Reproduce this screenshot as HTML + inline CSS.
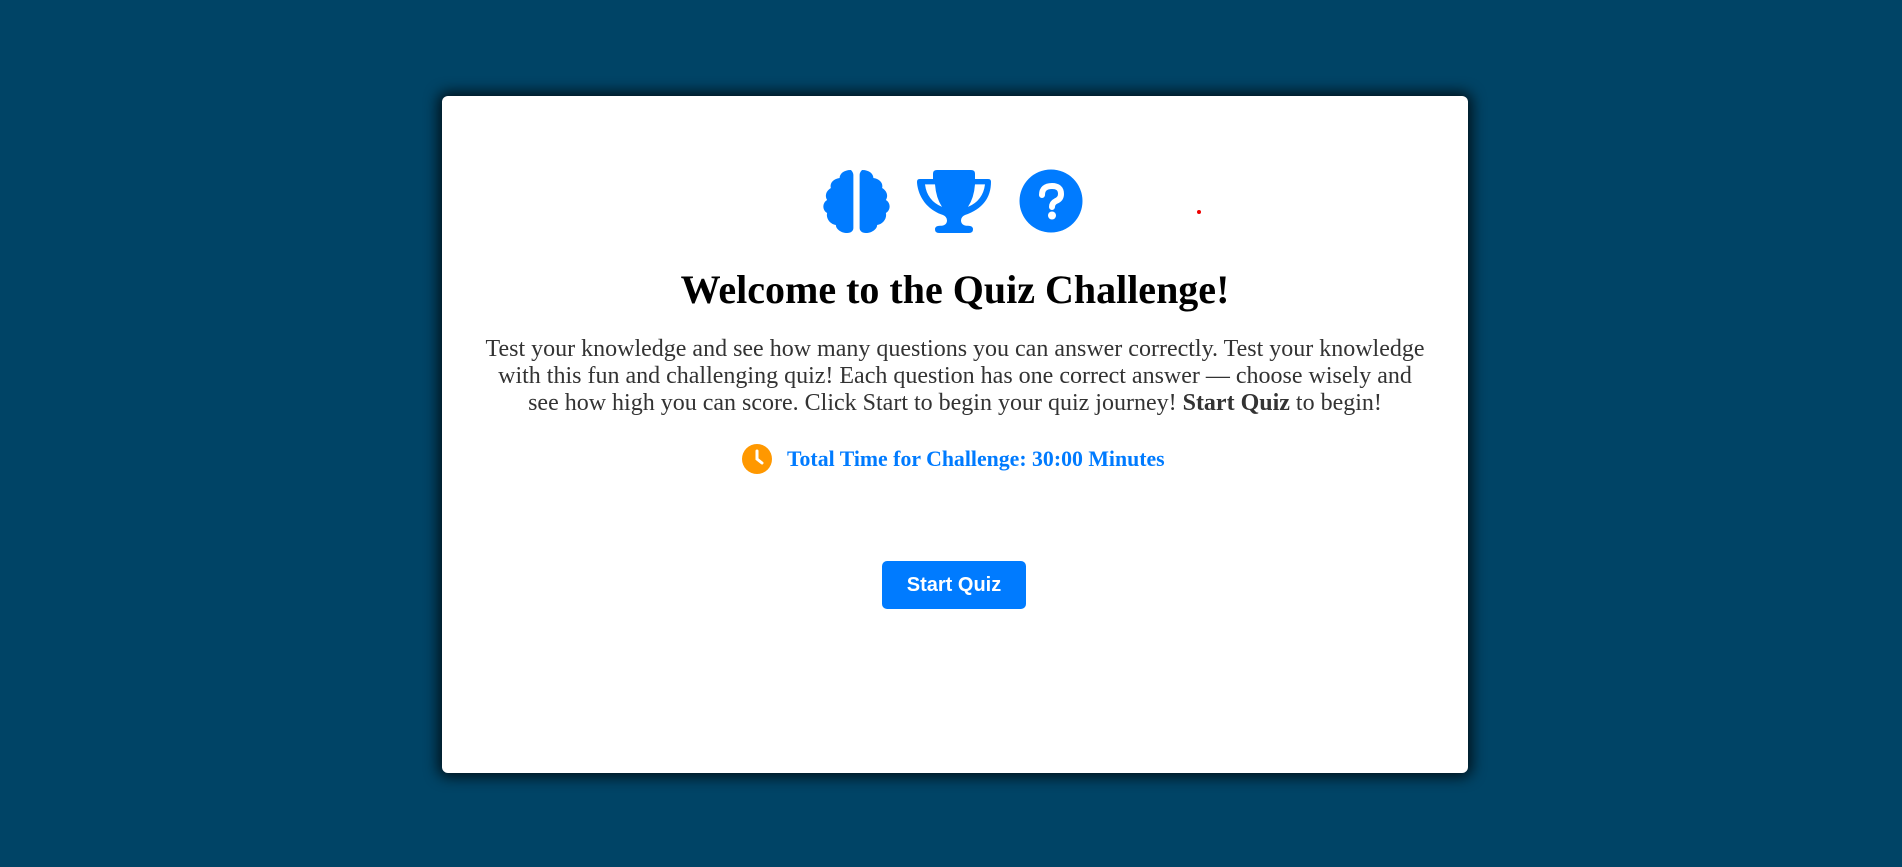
<!DOCTYPE html>
<html><head><meta charset="utf-8"><style>
html,body{margin:0;padding:0;width:1902px;height:867px;background:#004466;overflow:hidden}
.card{position:absolute;left:442px;top:96px;width:1026px;height:677px;background:#fff;border-radius:6px;box-shadow:0 0 14px 4px rgba(0,0,0,.75)}
h1{position:absolute;left:0;width:1026px;top:170px;margin:0;text-align:center;font:bold 40px "Liberation Serif",serif;color:#000}
p{position:absolute;left:42px;width:942px;top:240px;margin:0;text-align:center;font:24px/27px "Liberation Serif",serif;color:#333}
.time{position:absolute;left:300px;top:348px;display:flex;align-items:center;font:bold 21.8px "Liberation Serif",serif;color:#007bff}
.btn{position:absolute;left:440px;top:465px;width:144px;height:48px;background:#007bff;border-radius:5px;color:#fff;font:bold 20px/48px "Liberation Sans",sans-serif;text-align:center}
.dot{position:absolute;left:1197px;top:210px;width:4px;height:4px;border-radius:50%;background:#e00}
</style></head><body>
<div class="card">
<h1>Welcome to the Quiz Challenge!</h1>
<p>Test your knowledge and see how many questions you can answer correctly. Test your knowledge with this fun and challenging quiz! Each question has one correct answer — choose wisely and see how high you can score. Click Start to begin your quiz journey! <b>Start Quiz</b> to begin!</p>
<div class="time"><svg width="30" height="30" style="margin-right:15px"><circle cx="15" cy="15" r="15" fill="#ff9800"/><path d="M15 7v8l5 4" stroke="#fff" stroke-width="3" fill="none" stroke-linecap="round"/></svg>Total Time for Challenge: 30:00 Minutes</div>
<div class="btn">Start Quiz</div>
</div>
<div class="dot"></div>
<svg style="position:absolute;left:0;top:0" width="1902" height="867">
<g fill="#007bff">
<g transform="translate(856.5 0) scale(1.25 1) translate(-856.5 0)">
<path d="M852 170c-6 0-9 4-9 8-5 1-8 5-7 10-4 3-5 8-3 12-4 3-4 10 0 13-1 5 2 11 7 12 0 4 4 8 9 8 3 0 5-2 5-5v-53c0-3-2-5-2-5z"/>
<path d="M861 170c6 0 9 4 9 8 5 1 8 5 7 10 4 3 5 8 3 12 4 3 4 10 0 13 1 5-2 11-7 12 0 4-4 8-9 8-3 0-5-2-5-5v-53c0-3 2-5 2-5z"/>
</g>
<g transform="translate(0 170) scale(1 0.9) translate(0 -170)">
<path d="M938 170h33q4 0 4 4v6h13q3 0 3 3 0 27-26 37 -4 2-4 6q0 6 7 6 5 0 5 4t-4 4h-30q-4 0-4-4t5-4q7 0 7-6 0-4-4-6c-26-10-26-37-26-37q0-3 3-3h13v-6q0-4 4-4zm-13 16q2 18 17 25-6-10-7-25zm60 0h-10q-1 15-7 25 15-7 17-25z"/>
</g>
<circle cx="1051" cy="201" r="31.5"/>
</g>
<path d="M1042 195q0-9 10-9 9 0 9 8 0 5-5 7-4 2-4 6" fill="none" stroke="#fff" stroke-width="6" stroke-linecap="round"/>
<circle cx="1052" cy="215.5" r="4" fill="#fff"/>
</svg>
</body></html>
